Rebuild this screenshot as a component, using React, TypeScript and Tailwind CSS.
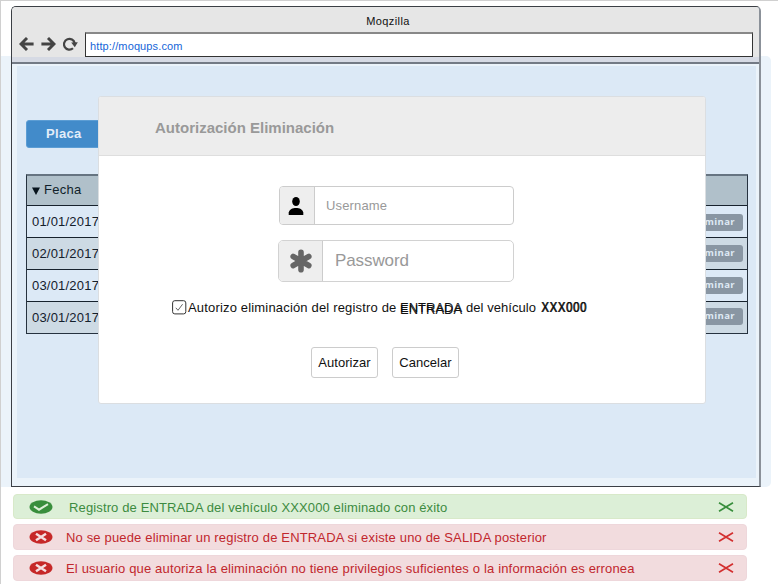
import React from "react";

const rows = [
  { date: "01/01/2017", nudge: "mt-[2px]" },
  { date: "02/01/2017", nudge: "" },
  { date: "03/01/2017", nudge: "" },
  { date: "03/01/2017", nudge: "mb-[2px]" },
];

function BackIcon({ flip = false }: { flip?: boolean }) {
  return (
    <svg width="15" height="14" viewBox="0 0 15 14" className={flip ? "-scale-x-100" : ""}>
      <path d="M8 1 L2 7 L8 13 M2.4 7 H14.6" fill="none" stroke="#444" strokeWidth="2.9" />
    </svg>
  );
}

function ReloadIcon() {
  return (
    <svg width="15" height="14" viewBox="0 0 15 14">
      <path d="M10 11.3 A5.4 5.4 0 1 1 11.7 6.2" fill="none" stroke="#444" strokeWidth="2.2" />
      <path d="M8.2 5.6 L14.8 5.2 L11.8 10.2 Z" fill="#444" />
    </svg>
  );
}

function Window() {
  return (
    <div className="relative flex h-[481px] w-[750px] flex-col overflow-hidden rounded-t-[5px] border border-[#3b3f45] border-r-2 border-r-[#8b9199] bg-[#ebf3fa]">
      <div className="flex h-[50px] shrink-0 flex-col bg-[#e6e6e6]">
        <div className="flex h-[24px] items-end justify-center pb-[3px] text-[11px] leading-[14px] tracking-[0.4px] text-[#111]">
          <span className="pl-[5px]">Moqzilla</span>
        </div>
        <div className="flex h-[26px] pt-px">
          <div className="flex w-[73px] gap-[7px] pl-[7px] pt-[5px]">
            <BackIcon />
            <BackIcon flip />
            <ReloadIcon />
          </div>
          <div className="flex h-[25px] w-[668px] items-center border border-[#333] border-t-2 border-t-[#888] bg-white pl-[4px] pt-[2px] text-[11px] tracking-[0.12px] text-[#1565d8]">
            http://moqups.com
          </div>
        </div>
      </div>
      <div className="h-[7px] shrink-0 border-b-2 border-[#737a85] bg-[#d6dae4]" />
      <div className="flex grow flex-col pb-[8px] pl-[5px] pr-[3px] pt-[2px]">
        <div className="flex grow flex-col bg-[#dce9f6] pl-[9px] pt-[54px]">
          <div className="flex h-[28px] w-[140px] items-center rounded-[3px] border border-[#5c9dd4] bg-[#428bca] pl-[19px] text-[13px] font-bold tracking-[0.3px] text-[#e2edf8]">
            Placa
          </div>
          <div className="mt-[26px] flex w-[722px] flex-col border border-[#26323f] border-t-2 border-t-[#667481]">
            <div className="flex h-[29px] items-center gap-[4px] bg-[#b0c0ca] pb-px pl-[5px] text-[13px] tracking-[0.25px] text-[#111f2b]">
              <svg width="8" height="8" viewBox="0 0 8 8" className="mt-[2px]">
                <path d="M0 .5H8L4 8Z" fill="#07131c" />
              </svg>
              Fecha
            </div>
            {rows.map((row, i) => (
              <div
                key={i}
                className={
                  "flex h-[32px] items-center justify-between border-t border-[#17222d] pl-[5px] pr-[4px] text-[13px] tracking-[0.2px] text-[#14202c] " +
                  (i % 2 ? "bg-[#cddae4]" : "bg-[#dce9f6]")
                }
              >
                {row.date}
                <span
                  className={
                    "flex h-[17px] w-[60px] items-center justify-end rounded-[3px] bg-[#8996a3] pr-[8px] font-['Open_Sans','Noto_Sans',sans-serif] text-[9.5px] font-bold tracking-[0.4px] text-[#dfeaf5] " +
                    row.nudge
                  }
                >
                  Eliminar
                </span>
              </div>
            ))}
          </div>
        </div>
      </div>
    </div>
  );
}

function Modal() {
  return (
    <div className="absolute left-[97px] top-[95px] flex h-[308px] w-[608px] flex-col overflow-hidden rounded-[3px] border border-[#dbdee1] bg-white">
      <div className="flex h-[59px] shrink-0 items-center border-b border-[#dedede] bg-[#ededed] pl-[56px] pt-[4px] text-[15px] font-bold text-[#999]">
        Autorización Eliminación
      </div>
      <div className="ml-[180px] mt-[30px] flex h-[39px] w-[235px] shrink-0 overflow-hidden rounded-[4px] border border-[#ccc]">
        <div className="flex w-[35px] items-center justify-center border-r border-[#ccc] bg-[#eee] pr-[2px] pt-px">
          <svg width="16" height="18" viewBox="0 0 16 18">
            <ellipse cx="8" cy="4.5" rx="3.8" ry="4.5" fill="#000" />
            <path d="M.7 18V15.5C1.4 12.3 4.5 10.9 8 10.9S14.7 12.3 15.3 15.5V18Z" fill="#000" />
          </svg>
        </div>
        <span className="self-center pl-[11px] text-[13px] tracking-[0.15px] text-[#999]">Username</span>
      </div>
      <div className="ml-[179px] mt-[15px] flex h-[42px] w-[236px] shrink-0 overflow-hidden rounded-[5px] border border-[#d2d2d2]">
        <div className="flex w-[44px] items-center justify-center border-r border-[#ccc] bg-[#eee]">
          <svg width="22" height="24" viewBox="0 0 22 24">
            <path d="M11 3.2V20.8M3.2 7.5L18.8 16.5M18.8 7.5L3.2 16.5" stroke="#666" strokeWidth="5.6" strokeLinecap="round" />
          </svg>
        </div>
        <span className="self-center pb-px pl-[12px] text-[17px] tracking-[-0.1px] text-[#999]">Password</span>
      </div>
      <div className="ml-[73px] mt-[18px] flex h-[16px] shrink-0 items-center text-[13px] leading-[16px] text-[#111]">
        <svg width="15" height="15" viewBox="0 0 15 15" className="mb-[2px] mr-px shrink-0">
          <rect x=".6" y=".7" width="13.2" height="13.2" rx="2.2" fill="#fff" stroke="#333" />
          <path d="M3.8 7.8L6 10.3L10.6 4.2" fill="none" stroke="#666" />
        </svg>
        <span className="w-[212px] shrink-0 whitespace-nowrap tracking-[0.17px]">Autorizo eliminación del registro de</span>
        <span className="relative w-[66px] shrink-0 whitespace-nowrap">
          ENTRADA
          <span className="absolute left-0 top-[2px]">ENTRADA</span>
        </span>
        <span className="w-[75px] shrink-0 whitespace-nowrap tracking-[0.05px]">del vehículo</span>
        <span className="relative w-[58px] shrink-0 origin-left scale-x-[0.88] scale-y-110 whitespace-nowrap tracking-[0.7px]">
          XXX000
          <span className="absolute left-[0.8px] top-0">XXX000</span>
        </span>
      </div>
      <div className="ml-[212px] mt-[31px] flex gap-[14px] text-[13px] tracking-[0.05px] text-[#111]">
        <button className="h-[31px] w-[67px] rounded-[3px] border border-[#ccc]">Autorizar</button>
        <button className="h-[31px] w-[67px] rounded-[3px] border border-[#ccc]">Cancelar</button>
      </div>
    </div>
  );
}

function Alert({ ok = false, children }: { ok?: boolean; children: React.ReactNode }) {
  return (
    <div
      className={
        "flex w-[734px] shrink-0 items-center rounded-[4px] border pl-[15px] pr-[12px] text-[13px] " +
        (ok
          ? "h-[25px] border-[#d8e9c9] bg-[#dcefd7] pt-px text-[#3c8b41]"
          : "h-[26px] border-[#eed7db] bg-[#f2dcde] text-[#c1272d]")
      }
    >
      <svg width="24" height="14" viewBox="0 0 24 14" className="shrink-0">
        <ellipse cx="12" cy="7" rx="11.5" ry="6.8" fill={ok ? "#388e3c" : "#c62828"} />
        <path
          d={ok ? "M5 6.4L10 9.7L19 4.2" : "M7 3.8L17 10.2M17 3.8L7 10.2"}
          stroke={ok ? "#dcefd7" : "#f5dfe1"}
          strokeWidth={ok ? 2 : 2.5}
          fill="none"
        />
      </svg>
      <span className={"grow whitespace-nowrap pt-px " + (ok ? "pl-[16px] tracking-[0.13px]" : "pl-[13px] tracking-[0.16px]")}>
        {children}
      </span>
      <svg width="16" height="10" viewBox="0 0 16 10" className="shrink-0">
        <path d="M1 .8L15 9.2M15 .8L1 9.2" stroke={ok ? "#388e3c" : "#d32f2f"} strokeWidth="1.7" />
      </svg>
    </div>
  );
}

export default function App() {
  return (
    <div className="relative flex h-[584px] w-[778px] flex-col overflow-hidden border-l border-t border-[#d0d0d0] bg-white font-['Liberation_Sans',Arial,sans-serif]">
      <div className="absolute left-0 top-[55px] h-[431px] w-[770px] rounded-r-[5px] bg-[#ebf3fa]" />
      <div className="pl-[10px] pt-[5px]">
        <Window />
      </div>
      <div className="flex flex-col gap-[5px] pl-[12px] pt-[7px]">
        <Alert ok>Registro de ENTRADA del vehículo XXX000 eliminado con éxito</Alert>
        <Alert>No se puede eliminar un registro de ENTRADA si existe uno de SALIDA posterior</Alert>
        <Alert>El usuario que autoriza la eliminación no tiene privilegios suficientes o la información es erronea</Alert>
      </div>
      <Modal />
    </div>
  );
}
